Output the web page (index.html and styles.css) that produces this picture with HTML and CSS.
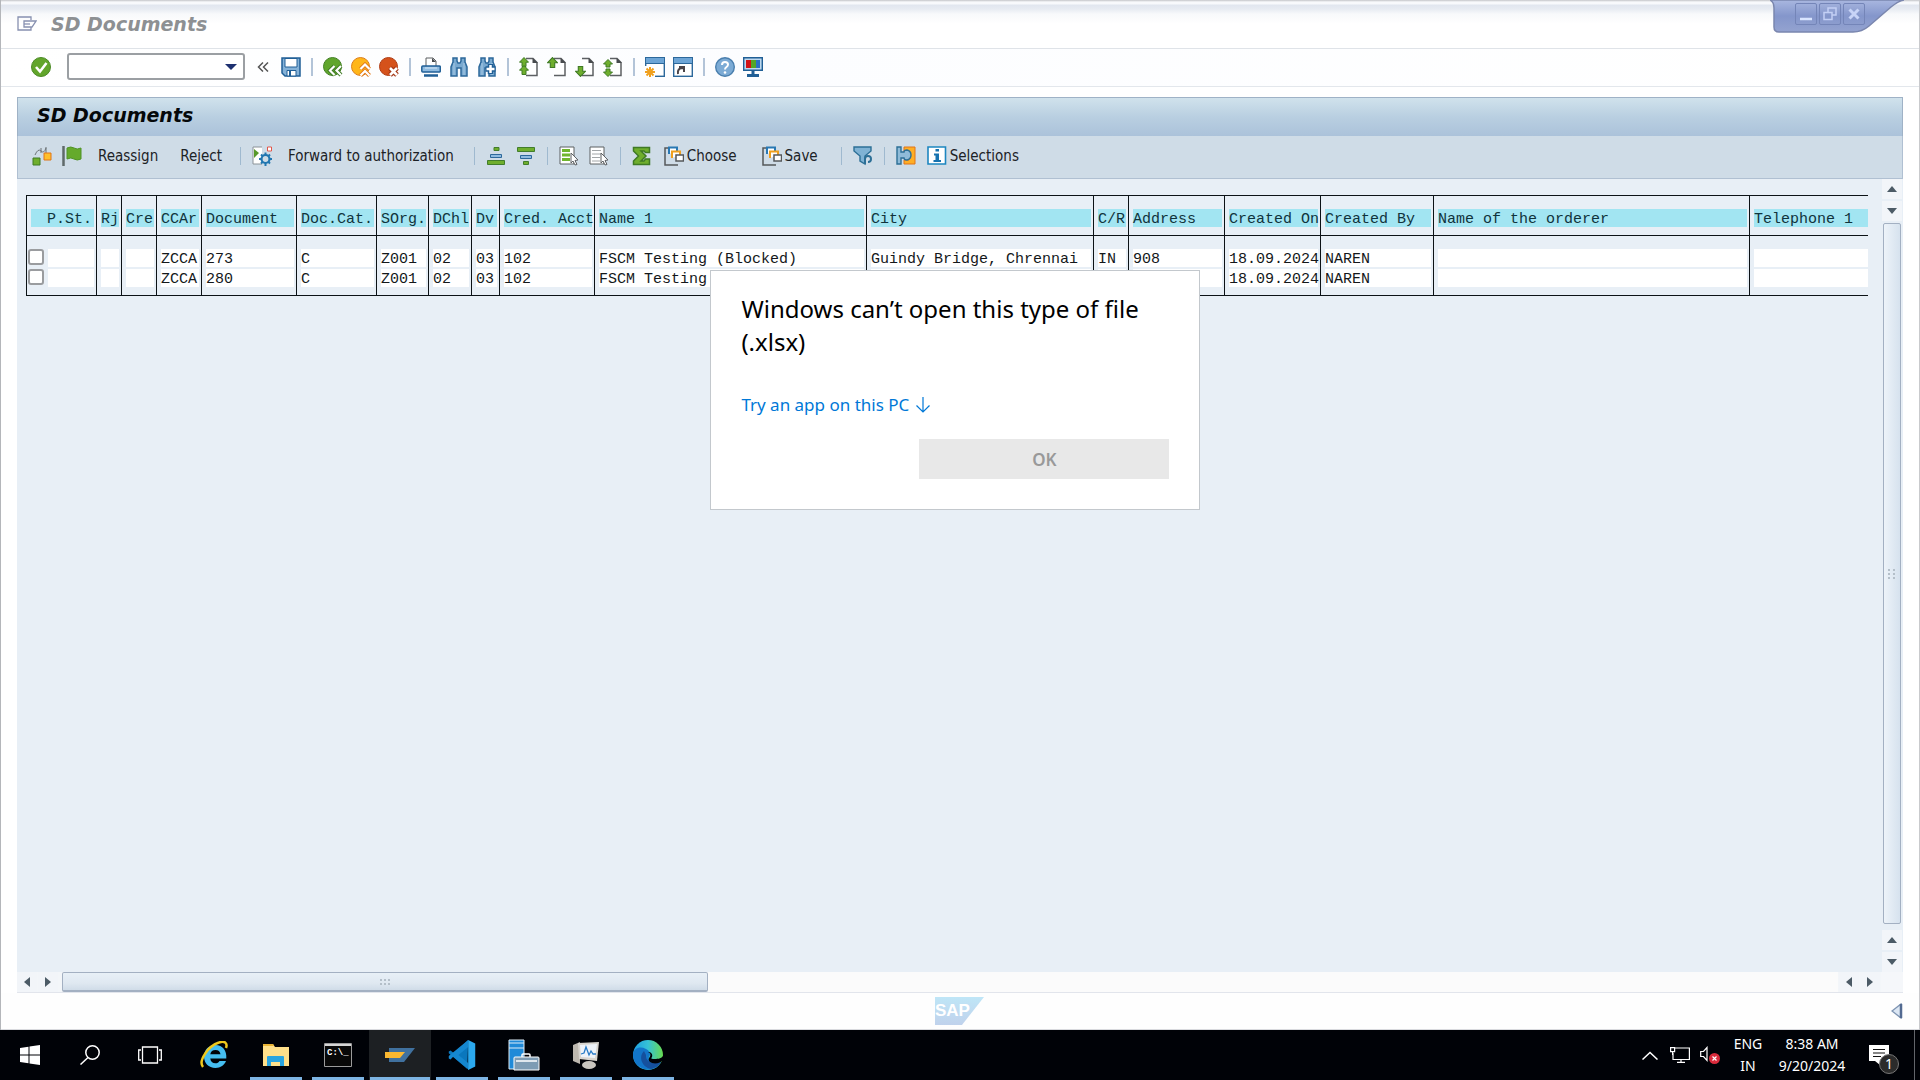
FILE: index.html
```html
<!DOCTYPE html>
<html lang="en">
<head>
<meta charset="utf-8">
<title>SD Documents</title>
<link rel="stylesheet" href="styles.css">
</head>
<body>
<svg class="defs" aria-hidden="true">
  <symbol id="bino" viewBox="0 0 20 20"><path d="M4 1h4v3l1 2h2l1-2V1h4v4l2 5v9h-6v-8H8v8H2v-9l2-5z" fill="#79a9d0" stroke="#2c689b" stroke-width="1.5"/><path d="M5 6v12M15 6v12" stroke="#a8c9e4"/></symbol>
  <symbol id="page" viewBox="0 0 20 20"><path d="M7 1.500h7l4 4v13H7" fill="#fff" stroke="#5d6063" stroke-width="1.500"/><path d="M13.500 1v5H19z" fill="#484b4e"/></symbol>
  <symbol id="up" viewBox="0 0 10 10"><path d="M5 .5 9.500 5.200H7V9.500H3V5.200H.5z" fill="#6fae2d" stroke="#3f7a24"/></symbol>
  <symbol id="down" viewBox="0 0 10 10"><path d="M5 9.500 .5 4.800H3V.5h4v4.300h2.500z" fill="#6fae2d" stroke="#3f7a24"/></symbol>
  <symbol id="updown" viewBox="0 0 10 18"><path d="M5 .5 9.500 5H7v3h-4V5H.5zM5 17.500.5 13H3v-3h4v3h2.500z" fill="#6fae2d" stroke="#3f7a24"/></symbol>
  <symbol id="variant" viewBox="0 0 20 20"><path d="M4 2H1v17h13" fill="none" stroke="#55585b" stroke-width="1.500"/><path d="M5 8V1.500h8V5" fill="#fff" stroke="#2878b4" stroke-width="2"/><path d="M8 12V5.500h8V9" fill="#fff" stroke="#f0a01e" stroke-width="2"/><path d="M12 9h7.500v6H12z" fill="#fff" stroke="#55585b" stroke-width="1.500"/></symbol>
  <symbol id="tri-up" viewBox="0 0 10 6"><path d="M0 6 5 0l5 6z" fill="#4c5b66"/></symbol>
  <symbol id="tri-down" viewBox="0 0 10 6"><path d="M0 0h10L5 6z" fill="#4c5b66"/></symbol>
  <symbol id="tri-left" viewBox="0 0 6 10"><path d="M6 0v10L0 5z" fill="#4c5b66"/></symbol>
  <symbol id="tri-right" viewBox="0 0 6 10"><path d="M0 0v10l6-5z" fill="#4c5b66"/></symbol>
</svg>

<div class="window">
  <header class="titlebar">
    <button class="icon-btn" aria-label="System menu"><svg width="20" height="16" viewBox="0 0 20 16" fill="none" stroke="#8790b0" stroke-width="1.300"><path d="M14 4V1H1v13h13v-3M7 5h12l-4 6H7z"/><path d="M7 8h6"/></svg></button>
    <span class="title">SD Documents</span>
  </header>
  <div class="win-controls">
    <svg class="win-shape" viewBox="0 0 134 36" width="134" height="36"><defs><linearGradient id="wc" x2="0" y2="1"><stop stop-color="#a9b7e0"/><stop offset=".5" stop-color="#8496cb"/><stop offset="1" stop-color="#94a3d0"/></linearGradient></defs><path d="M0 0q4 2 4 8v19q0 5 5 5h74q9 0 16-6l22-19q7-6 13-7z" fill="url(#wc)" stroke="#7a86ae" stroke-width="1.500"/></svg>
    <button aria-label="Minimize"><svg width="20" height="20" viewBox="0 0 20 20"><path d="M4 15h12" stroke="#d9e5ff" stroke-width="2.500"/></svg></button>
    <button aria-label="Restore"><svg width="20" height="20" viewBox="0 0 20 20" fill="none" stroke="#c3d0f5" stroke-width="1.500"><path d="M4 8.500h8v7H4zM8 8V4h8v7h-3.500"/></svg></button>
    <button aria-label="Close"><svg width="20" height="20" viewBox="0 0 20 20"><path d="m5.500 5.500 9 9M14.500 5.500l-9 9" stroke="#c8d4f7" stroke-width="3"/></svg></button>
  </div>

  <nav class="std-toolbar" aria-label="Standard toolbar">
    <button class="icon-btn enter" aria-label="Enter"><svg class="i20" viewBox="0 0 20 20"><circle cx="10" cy="10" r="9.500" fill="#62a52b" stroke="#4c8b27"/><path d="m5 10 4 4.500L15.500 6" fill="none" stroke="#fff" stroke-width="2.600"/></svg></button>
    <div class="command"><input type="text" aria-label="Command"><svg width="12" height="6" viewBox="0 0 12 6"><path d="M0 0h12L6 6z" fill="#1d3070"/></svg></div>
    <button class="icon-btn collapse" aria-label="Collapse"><svg width="12" height="10" viewBox="0 0 12 10" fill="none" stroke="#555" stroke-width="1.500"><path d="M6 .5 1.500 5 6 9.500M11 .5 6.500 5 11 9.500"/></svg></button>
    <button class="icon-btn save" aria-label="Save"><svg class="i20" viewBox="0 0 20 20"><path d="M1 1h18v18H4l-3-3z" fill="#85b2d8" stroke="#205f96" stroke-width="1.500"/><path d="M4 1.500h12V10H4zM6 13.500h9V19H6z" fill="#fff" stroke="#205f96"/><path d="M8 14h2v5H8z" fill="#205f96"/></svg></button>
    <i class="sep"></i>
    <button class="icon-btn" aria-label="Back"><svg class="i20" viewBox="0 0 20 20"><circle cx="9.500" cy="9.500" r="9" fill="#60a52c" stroke="#438025"/><path d="M11.500 9 7 13.500l4.500 4.500M18 9l-4.500 4.500L18 18" fill="none" stroke="#3f7a24" stroke-width="4"/><path d="M11.500 9 7 13.500l4.500 4.500M18 9l-4.500 4.500L18 18" fill="none" stroke="#fff" stroke-width="2.200"/></svg></button>
    <button class="icon-btn" aria-label="Exit"><svg class="i20" viewBox="0 0 20 20"><circle cx="9.500" cy="9.500" r="9" fill="#ffb61a" stroke="#dc7e1b"/><path d="m9.500 12 4.500-4.500 4.500 4.500M9.500 18.500 14 14l4.500 4.500" fill="none" stroke="#e37a18" stroke-width="4"/><path d="m9.500 12 4.500-4.500 4.500 4.500M9.500 18.500 14 14l4.500 4.500" fill="none" stroke="#fff" stroke-width="2.200"/></svg></button>
    <button class="icon-btn" aria-label="Cancel"><svg class="i20" viewBox="0 0 20 20"><circle cx="9.500" cy="9.500" r="9" fill="#d5521b" stroke="#b03d15"/><path d="m11 11 7 7M18 11l-7 7" stroke="#a33513" stroke-width="5"/><path d="m11 11 7 7M18 11l-7 7" stroke="#fff" stroke-width="2.600"/></svg></button>
    <i class="sep"></i>
    <button class="icon-btn" aria-label="Print"><svg class="i20" viewBox="0 0 20 20"><path d="M5 9V1h7l3 3v5" fill="#fff" stroke="#5d6063"/><path d="M11 1v4h4z" fill="#484b4e"/><rect x=".8" y="9" width="18.500" height="6" rx="1" fill="#8fbbe0" stroke="#205f96" stroke-width="1.500"/><path d="M3 18.500h14" stroke="#205f96" stroke-width="2.500"/><path d="M4 11h12" stroke="#d6e8f7"/></svg></button>
    <button class="icon-btn" aria-label="Find"><svg class="i20"><use href="#bino"/></svg></button>
    <button class="icon-btn" aria-label="Find next"><svg class="i20" viewBox="0 0 20 20"><use href="#bino" width="20" height="20"/><path d="M13.500 7v10M8.500 12h10" stroke="#205f96" stroke-width="5.500"/><path d="M13.500 8v8M9.500 12h8" stroke="#fff" stroke-width="2.500"/></svg></button>
    <i class="sep"></i>
    <button class="icon-btn" aria-label="First page"><svg class="i20" viewBox="0 0 20 20"><use href="#page" width="20" height="20"/><use href="#up" width="10" height="10"/><use href="#up" y="8" width="10" height="10"/></svg></button>
    <button class="icon-btn" aria-label="Previous page"><svg class="i20" viewBox="0 0 20 20"><use href="#page" width="20" height="20"/><use href="#up" width="11" height="11"/></svg></button>
    <button class="icon-btn" aria-label="Next page"><svg class="i20" viewBox="0 0 20 20"><use href="#page" width="20" height="20"/><use href="#down" y="9" width="11" height="11"/></svg></button>
    <button class="icon-btn" aria-label="Last page"><svg class="i20" viewBox="0 0 20 20"><use href="#page" width="20" height="20"/><use href="#updown" y="2" width="10" height="18"/></svg></button>
    <i class="sep"></i>
    <button class="icon-btn" aria-label="New session"><svg class="i20" viewBox="0 0 20 20"><rect x=".7" y=".7" width="18.600" height="18.600" fill="#fff" stroke="#2c689b" stroke-width="1.400"/><path d="M1 1h18v5H1z" fill="#6da5d6"/><path d="M1 6.500h18" stroke="#2c689b"/><path d="M0 9h10v11H0z" fill="#fff"/><path d="M5 10v10M0 15h10M1.500 11.500l7 7M8.500 11.500l-7 7" stroke="#f0a01e" stroke-width="2"/></svg></button>
    <button class="icon-btn" aria-label="Create shortcut"><svg class="i20" viewBox="0 0 20 20"><rect x=".7" y=".7" width="18.600" height="18.600" fill="#fff" stroke="#2c689b" stroke-width="1.400"/><path d="M1 1h18v5H1z" fill="#6da5d6"/><path d="M1 6.500h18" stroke="#2c689b"/><path d="M5 17q-1-6 5-6M6 10h5v5" fill="none" stroke="#4a4448" stroke-width="2"/></svg></button>
    <i class="sep"></i>
    <button class="icon-btn" aria-label="Help"><svg class="i20" viewBox="0 0 20 20"><circle cx="10" cy="10" r="9.300" fill="#7cabd5" stroke="#4a7fae" stroke-width="1.400"/><path d="M7 8q0-3 3-3t3 2.500q0 1.500-1.500 2.500T10 12.500" fill="none" stroke="#fff" stroke-width="2"/><circle cx="10" cy="15.500" r="1.300" fill="#fff"/></svg></button>
    <button class="icon-btn" aria-label="Customize layout"><svg class="i20" viewBox="0 0 20 20"><path d="M.7.7h18.600v12.600H.7z" fill="#bdd8ee" stroke="#205f96" stroke-width="1.400"/><path d="M3 3h5v8H3z" fill="#d11216"/><path d="M8 3h5v8H8z" fill="#54a528"/><path d="M13 3h4v8h-4z" fill="#2b6fc4"/><path d="M10 13v5M4 18.500h12" stroke="#205f96" stroke-width="3"/></svg></button>
  </nav>

  <main class="content">
    <h1 class="screen-title">SD Documents</h1>
    <div class="app-toolbar">
      <button aria-label="Check"><svg class="i20" viewBox="0 0 20 20"><path d="M3 9q3-7 6-4t5-3M14 7V1M9 2v5" fill="none" stroke="#6c7377"/><path d="M1 12h7v7H1z" fill="#6fae2d" stroke="#3f7a24"/><path d="M12 7h7v7h-7z" fill="#ffbf2b" stroke="#e07418"/></svg></button>
      <button class="flag" aria-label="Flag"><svg class="i20" viewBox="0 0 20 20"><path d="M1.500 0v20" stroke="#5f6a6a" stroke-width="2.500"/><path d="M5 2q4-2 7 0t7 0v11q-4 2-7 0t-7 0z" fill="#65aa2b" stroke="#4f9226"/></svg></button>
      <button class="txt reassign">Reassign</button>
      <button class="txt reject">Reject</button>
      <i class="sep"></i>
      <button aria-label="Process"><svg class="i20" viewBox="0 0 20 20"><path d="M10 18H1V1h9" fill="#fff" stroke="#8b9398"/><path d="m2 3 5 4-5 5z" fill="#57992b"/><circle cx="13.500" cy="13" r="4" fill="#cfdce6" stroke="#2176b0" stroke-width="2.200"/><path d="M13.500 6.500v3M13.500 17v3M7 13h3M17 13h3M9 8.500l2 2M16 15.500l2 2M18 8.500l-2 2M11 15.500l-2 2" stroke="#2176b0" stroke-width="2"/><path d="M15.500 1h4v4h-4z" fill="#fff" stroke="#e0564a"/></svg></button>
      <button class="txt forward">Forward to authorization</button>
      <i class="sep"></i>
      <button aria-label="Sort ascending"><svg class="i20" viewBox="0 0 20 20" stroke="#417d2b"><path d="M8 1.500h5v3H8zM1.500 14.500h17v4h-17z" fill="#6fae2d"/><path d="M4.500 8.500h11v3h-11z" fill="#8fbbe0" stroke="#2c689b"/></svg></button>
      <button aria-label="Sort descending"><svg class="i20" viewBox="0 0 20 20" stroke="#417d2b"><path d="M1.500 1.500h17v4h-17zM7.500 15.500h5v3h-5z" fill="#6fae2d"/><path d="M4.500 9.500h11v3h-11z" fill="#8fbbe0" stroke="#2c689b"/></svg></button>
      <i class="sep"></i>
      <button aria-label="Select all"><svg class="i20" viewBox="0 0 20 20"><path d="M1 1h14v17H1z" fill="#fff" stroke="#5d6063"/><path d="M3 4.500h8M3 9h8M3 13.500h8" stroke="#70b52d" stroke-width="3"/><path d="m12 7 7 7-3 .5 2 4-2 .5-2-4-2 2z" fill="#fff" stroke="#5d6063"/></svg></button>
      <button aria-label="Deselect all"><svg class="i20" viewBox="0 0 20 20"><path d="M1 1h14v17H1z" fill="#fff" stroke="#5d6063"/><path d="M3 4.500h9M3 8h9M3 11.500h8M3 15h8" stroke="#a2a6a8"/><path d="m12 7 7 7-3 .5 2 4-2 .5-2-4-2 2z" fill="#fff" stroke="#5d6063"/></svg></button>
      <i class="sep"></i>
      <button aria-label="Total"><svg class="i20" viewBox="0 0 20 20"><path d="M1.500 1.500h16v5h-4L12 5H9l5 5-5 5h3l1.500-2h4v5.500h-16V15l5-5-5-5z" fill="#6fae2d" stroke="#3f7a24" stroke-width="1.500"/></svg></button>
      <button class="txt choose"><svg class="i20"><use href="#variant"/></svg>Choose</button>
      <button class="txt savev"><svg class="i20"><use href="#variant"/></svg>Save</button>
      <i class="sep"></i>
      <button aria-label="Filter"><svg class="i20" viewBox="0 0 20 20"><path d="M1 1h17v4l-6 5v8l-5-3v-5L1 5z" fill="#7fb2d4" stroke="#2c6f96" stroke-width="1.400"/><path d="M12 18v-5q0-3 3-3t3 3-3 3" fill="none" stroke="#2c6f96" stroke-width="2"/></svg></button>
      <i class="sep"></i>
      <button aria-label="Interface"><svg class="i20" viewBox="0 0 20 20"><path d="M8 1h11v17H8v-4h5V6H8z" fill="#ffae24" stroke="#e07418"/><path d="M1 1h4v5h3q0-2 3-2 4 1 4 5t-4 5q-3 0-3-2H5v6H1z" fill="#8fbbd8" stroke="#2c6f96" stroke-width="1.400"/></svg></button>
      <button class="txt selections"><svg class="i20" viewBox="0 0 20 20"><path d="M1 1h17.500v17H1z" fill="#fff" stroke="#1d86c0" stroke-width="1.600"/><path d="M8.500 3h3.500v2.500H8.500zM7 7.500h5V14h2v2H6.500v-2h2V9.500H7z" fill="#1673b0"/></svg>Selections</button>
    </div>

    <div class="work">
      <div class="list">
        <table class="grid">
          <colgroup><col class="c70"><col class="c25"><col class="c35"><col class="c45"><col class="c95"><col class="c80"><col class="c52"><col class="c43"><col class="c28"><col class="c95"><col class="c272"><col class="c227"><col class="c35"><col class="c96"><col class="c96"><col class="c113"><col class="c316"><col></colgroup>
          <thead><tr><th class="pst"><span>P.St.</span></th><th><span>Rj</span></th><th><span>Cre</span></th><th><span>CCAr</span></th><th><span>Document</span></th><th><span>Doc.Cat.</span></th><th><span>SOrg.</span></th><th><span>DChl</span></th><th><span>Dv</span></th><th><span>Cred. Acct</span></th><th><span>Name 1</span></th><th><span>City</span></th><th><span>C/R</span></th><th><span>Address</span></th><th><span>Created On</span></th><th><span>Created By</span></th><th><span>Name of the orderer</span></th><th><span>Telephone 1</span></th></tr></thead>
          <tbody>
            <tr><td class="sel"><input type="checkbox" aria-label="Select document 273"><span></span></td><td><span></span></td><td><span></span></td><td><span>ZCCA</span></td><td><span>273</span></td><td><span>C</span></td><td><span>Z001</span></td><td><span>02</span></td><td><span>03</span></td><td><span>102</span></td><td><span>FSCM Testing (Blocked)</span></td><td><span>Guindy Bridge, Chrennai</span></td><td><span>IN</span></td><td><span>908</span></td><td><span>18.09.2024</span></td><td><span>NAREN</span></td><td><span></span></td><td><span></span></td></tr>
            <tr><td class="sel"><input type="checkbox" aria-label="Select document 280"><span></span></td><td><span></span></td><td><span></span></td><td><span>ZCCA</span></td><td><span>280</span></td><td><span>C</span></td><td><span>Z001</span></td><td><span>02</span></td><td><span>03</span></td><td><span>102</span></td><td><span>FSCM Testing</span></td><td><span></span></td><td><span></span></td><td><span></span></td><td><span>18.09.2024</span></td><td><span>NAREN</span></td><td><span></span></td><td><span></span></td></tr>
          </tbody>
        </table>
      </div>
      <div class="vscroll">
        <button aria-label="Scroll up"><svg width="10" height="6"><use href="#tri-up"/></svg></button>
        <button aria-label="Scroll down"><svg width="10" height="6"><use href="#tri-down"/></svg></button>
        <div class="vthumb"><svg width="8" height="10" viewBox="0 0 8 10" fill="#b4bfc9"><path d="M0 0h2v2H0zM5 0h2v2H5zM0 4h2v2H0zM5 4h2v2H5zM0 8h2v2H0zM5 8h2v2H5z"/></svg></div>
        <button aria-label="Page up"><svg width="10" height="6"><use href="#tri-up"/></svg></button>
        <button aria-label="Page down"><svg width="10" height="6"><use href="#tri-down"/></svg></button>
      </div>
    </div>
    <div class="hscroll">
      <button aria-label="Scroll left"><svg width="6" height="10"><use href="#tri-left"/></svg></button>
      <button aria-label="Scroll right"><svg width="6" height="10"><use href="#tri-right"/></svg></button>
      <div class="htrack"><div class="hthumb"><svg width="10" height="8" viewBox="0 0 10 8" fill="#b4bfc9"><path d="M0 1h2v2H0zM4 1h2v2H4zM8 1h2v2H8zM0 5h2v2H0zM4 5h2v2H4zM8 5h2v2H8z"/></svg></div></div>
      <button aria-label="Page left"><svg width="6" height="10"><use href="#tri-left"/></svg></button>
      <button aria-label="Page right"><svg width="6" height="10"><use href="#tri-right"/></svg></button>
      <div class="corner"></div>
    </div>
  </main>

  <footer class="status">
    <div class="sap">SAP</div>
    <button class="icon-btn expand" aria-label="Show status"><svg width="12" height="16" viewBox="0 0 12 16"><path d="M10 1v14L1 8z" fill="#dce7f4" stroke="#7f95b3" stroke-width="1.400"/><path d="M10 1v14" stroke="#536a91" stroke-width="2.500"/></svg></button>
  </footer>
</div>

<section class="dialog" role="dialog" aria-labelledby="dlg-title">
  <h2 id="dlg-title">Windows can’t open this type of file (.xlsx)</h2>
  <a href="#">Try an app on this PC <svg width="14" height="16" viewBox="0 0 14 16" fill="none" stroke="#0078d7" stroke-width="1.200"><path d="M7 0v15M.5 8.500 7 15l6.500-6.500"/></svg></a>
  <button class="ok" disabled>OK</button>
</section>

<footer class="taskbar">
  <button class="tb-sys" aria-label="Start"><svg width="20" height="20" viewBox="0 0 20 20" fill="#fff"><path d="M0 3l8.500-1.200v7.700H0zM9.500 1.600 20 0v9.500H9.500zM0 10.500h8.500v7.700L0 17zM9.500 10.500H20V20L9.500 18.400z"/></svg></button>
  <button class="tb-sys" aria-label="Search"><svg width="20" height="20" viewBox="0 0 20 20" fill="none" stroke="#fff" stroke-width="1.500"><circle cx="12.500" cy="7.500" r="6.700"/><path d="M8 12.500.5 19.500"/></svg></button>
  <button class="tb-sys view" aria-label="Task view"><svg width="24" height="18" viewBox="0 0 24 18" fill="none" stroke="#fff" stroke-width="1.300"><path d="M4.500 1h15v16h-15zM3 4H.7v10H3M21 4h2.300v10H21"/></svg></button>
  <button class="tb-app" aria-label="Internet Explorer"><svg width="28" height="28" viewBox="0 0 28 28"><path d="M15.500 4C8.500 4 4 9 4 15.500S8.500 27 15.500 27c5 0 9-3 10.500-7h-6.500c-.8 1.600-2.300 2.300-4 2.300-3 0-5-1.800-5.200-4.800h16C27 9.500 22.500 4 15.500 4zm-5.200 9.200C10.700 10.500 12.600 9 15.500 9s4.600 1.500 5 4.200z" fill="#45bdf0"/><path d="M3 26C-2 20 8 5 19 1.500 24-.5 28 1.500 26 7" fill="none" stroke="#f0c81c" stroke-width="2.500"/></svg></button>
  <button class="tb-app open" aria-label="File Explorer"><svg width="28" height="24" viewBox="0 0 28 24"><path d="M1 1h10l2 3h14v19H1z" fill="#ffe08a"/><path d="M1 1h10l1 2H1z" fill="#e9b435"/><path d="M5 23v-9q0-1 1-1h15q1 0 1 1v9h-4v-4H9v4z" fill="#2aa5e0"/></svg></button>
  <button class="tb-app open" aria-label="Command Prompt"><svg width="28" height="24" viewBox="0 0 28 24"><path d="M.5.500h27v23H.5z" fill="#080808" stroke="#9b9b9b"/><path d="M1 1h26v2H1z" fill="#d5d5d5"/><text x="3" y="12" class="cmd">C:\_</text></svg></button>
  <button class="tb-app open active" aria-label="SAP Logon"><svg width="30" height="16" viewBox="0 0 30 16"><path d="M4 1h26L19 15H4z" fill="#40719f"/><path d="M0 5h20l-5 6H0z" fill="#fbb831"/></svg></button>
  <button class="tb-app open" aria-label="Visual Studio Code"><svg width="30" height="30" viewBox="0 0 30 34"><path d="M22 0 6 15 2 12 0 13v2l21 18z" fill="#0a77bd"/><path d="M23 34 5 19l-3 3-2-1v-3L22 0v8L11 17l11 9z" fill="#1587cf"/><path d="m22 0 8 4v26l-8 4z" fill="#2ba9ef"/></svg></button>
  <button class="tb-app open" aria-label="Server Manager"><svg width="32" height="32" viewBox="0 0 32 32"><path d="M1 1h15v29H1z" fill="#1f8ad8" stroke="#dcecf8"/><path d="M1 4h15M1 9h15" stroke="#dcecf8"/><path d="M6 19q0-1 1-1h23q1 0 1 1v12H6z" fill="#7d9cb4" stroke="#fff"/><path d="M14 18v-2q0-1 1-1h6q1 0 1 1v2M8 22h21" fill="none" stroke="#fff" stroke-width="1.500"/></svg></button>
  <button class="tb-app open" aria-label="Resource Monitor"><svg width="30" height="30" viewBox="0 0 30 30"><path d="M2 5 9 2v22l-7-3z" fill="#bcb7ae"/><path d="m7 3 21-1-2 19-18-2z" fill="#d8d5cf"/><path d="m9 5 17-1-2 14-14-1z" fill="#eef3f9"/><path d="m10 14 3-1 2-6 3 8 2-4 2 3h3" fill="none" stroke="#287bc7" stroke-width="1.300"/><ellipse cx="18" cy="25" rx="7" ry="4" fill="#c9c6bf"/></svg></button>
  <button class="tb-app open" aria-label="Microsoft Edge"><svg width="30" height="30" viewBox="0 0 30 30"><defs><linearGradient id="eg"><stop stop-color="#1b9de2"/><stop offset=".5" stop-color="#36c2d6"/><stop offset="1" stop-color="#68dc50"/></linearGradient></defs><circle cx="15" cy="15" r="15" fill="url(#eg)"/><path d="M0 14C1 8 7 6 13 9c4 2 5 5 3 8-1 3 1 6 6 6 3 0 4 0 6-1-4 8-14 10-21 5-5-3-7-8-7-13z" fill="#1275c9"/><path d="M11 11c-6 6-2 16 7 18 4-1 8-3 10-7-7 3-16 0-15-7z" fill="#15509d"/><path d="M15 12c3 1 3 4 1 6-1 2 0 4 3 5 4 1 8 0 10-2l1 1v-6c-2 3-6 3-10 3-2 0-2-1-1-2 1-3-1-5-4-5z" fill="#000207"/></svg></button>
  <div class="tray">
    <button class="t-chev" aria-label="Show hidden icons"><svg width="16" height="9" viewBox="0 0 16 9"><path d="m.5 8.500 7.500-7 7.500 7" fill="none" stroke="#fff" stroke-width="1.500"/></svg></button>
    <button class="t-net" aria-label="Network"><svg width="20" height="16" viewBox="0 0 20 16" fill="none" stroke="#fff" stroke-width="1.200"><path d="M5 1h14.400v11.500H3V6M11 12.500v3M7 15.400h8M.6.600h4v4h-4zM2.600 5v3"/></svg></button>
    <button class="t-vol" aria-label="Volume"><svg width="20" height="18" viewBox="0 0 20 18"><path d="M.7 5.500h2.800L7 1.500v13l-3.500-4H.7z" fill="none" stroke="#fff" stroke-width="1.200"/><circle cx="14.500" cy="12.500" r="5.500" fill="#d92b3c"/><path d="m12.500 10.500 4 4m0-4-4 4" stroke="#fff" stroke-width="1.200"/></svg></button>
    <div class="t-lang"><div>ENG</div><div>IN</div></div>
    <div class="t-clock"><div>8:38 AM</div><div>9/20/2024</div></div>
    <button class="t-note" aria-label="1 notification"><svg width="20" height="20" viewBox="0 0 20 20"><path d="M0 0h20v16h-9v4l-5-4H0z" fill="#fff"/><path d="M4 4.500h12M4 8h12M4 11.500h8" stroke="#111" stroke-width="1.200"/></svg><span class="badge">1</span></button>
    <div class="desk"></div>
  </div>
</footer>
</body>
</html>
```
FILE: styles.css
```css
* { box-sizing: border-box; }
body {
  margin: 0;
  min-height: 100vh;
  display: flex;
  flex-direction: column;
  position: relative;
  background: #fff;
  font-family: "DejaVu Sans Condensed", "DejaVu Sans", sans-serif;
  font-size: 15px;
  color: #1c2226;
}
button {
  margin: 0;
  padding: 0;
  border: 0;
  background: none;
  font: inherit;
  color: inherit;
  display: flex;
  align-items: center;
  justify-content: center;
  flex: none;
}
svg { display: block; flex: none; }
.defs { position: absolute; width: 0; height: 0; }
.i20 { width: 20px; height: 20px; }

.window {
  flex: 1;
  display: flex;
  flex-direction: column;
  position: relative;
  border-left: 1px solid #b4b6ba;
  border-right: 1px solid #c9cacd;
}
.titlebar {
  height: 49px;
  display: flex;
  align-items: center;
  gap: 14px;
  padding: 0 16px;
  border-bottom: 1px solid #dfe3e8;
  background: linear-gradient(#c3c4c8 0, #f8f9fc 2px, #f8f9fc 4px, #e1e6ef 5px, #e7ebf2 9px, #f8f9fb 14px, #fff 24px);
}
.title, .screen-title {
  font-family: "DejaVu Sans", sans-serif;
  font-weight: bold;
  font-style: italic;
  font-size: 19px;
  line-height: 24px;
}
.title { color: #8d9093; }
.win-controls {
  position: absolute;
  top: 0;
  right: 23px;
  width: 122px;
  height: 28px;
  display: flex;
  align-items: center;
  gap: 2px;
  padding-left: 21px;
}
.win-controls button { border: 1px solid #7485b8; border-radius: 2px; position: relative; }
.win-shape { position: absolute; top: 0; left: -4px; }

.std-toolbar {
  height: 38px;
  display: flex;
  align-items: center;
  gap: 8px;
  padding: 0 0 2px 30px;
  border-bottom: 1px solid #e3e7ec;
  background: linear-gradient(90deg, #fff 0, #fcfdff 40%, #fff 100%);
}
.sep {
  flex: none;
  width: 2px;
  height: 18px;
  margin: 0 2px;
  background: #b3c4d8;
}
.command {
  width: 178px;
  height: 27px;
  margin: 0 4px 0 8px;
  display: flex;
  align-items: center;
  padding-right: 6px;
  border: 2px solid #9b9fa3;
  border-radius: 3px;
  background: #fff;
}
.command input { flex: 1; min-width: 0; height: 21px; border: 0; background: none; outline: 0; }
.save { margin-left: 4px; }

.content {
  flex: 1;
  display: flex;
  flex-direction: column;
  margin: 10px 16px 0;
}
.screen-title {
  margin: 0;
  height: 39px;
  padding: 5px 19px;
  color: #05080a;
  border: solid #9fb2c6;
  border-width: 1px 1px 0;
  background: linear-gradient(#d0e2ec, #b9cfe1 50%, #abc2da);
}
.app-toolbar {
  height: 43px;
  display: flex;
  align-items: center;
  gap: 10px;
  padding: 0 0 2px 14px;
  border: solid #b0c0d2;
  border-width: 0 1px 1px;
  background: #cfdce7;
}
.app-toolbar .sep { width: 1px; margin: 0 1px; background: #9fb9cf; }
.txt { gap: 3px; white-space: nowrap; }
.reassign { margin-left: 6px; }
.reject { margin: 0 7px 0 12px; }
.forward { margin: 0 9px 0 6px; }
.choose { margin-left: 2px; }
.savev { margin: 0 12px 0 15px; }
.selections { margin-left: 1px; }

.work {
  flex: 1;
  display: flex;
  background: #e8eff6;
}
.list { flex: 1; min-width: 0; padding: 16px 13px 0 9px; }
.grid {
  width: 100%;
  table-layout: fixed;
  border-collapse: separate;
  border-spacing: 0;
  border: solid #0c1216;
  border-width: 1px 0;
  font: 15px/22px "Liberation Mono", monospace;
  color: #14171a;
}
.grid th, .grid td {
  padding: 0 2px 0 4px;
  border-left: 1px solid #0c1216;
  text-align: left;
  font-weight: normal;
  vertical-align: top;
  white-space: nowrap;
}
.grid th { height: 40px; padding-top: 13px; border-bottom: 1px solid #0c1216; }
.grid td { height: 20px; }
.grid tbody tr:first-child td { padding-top: 13px; }
.grid tbody tr:last-child td { padding-bottom: 6px; }
.grid span { display: block; height: 18px; margin-bottom: 2px; }
.grid th span { background: #a2e5f2; color: #10333c; }
.grid td span { background: #fff; }
.grid .pst span { padding-left: 16px; }
.grid th:last-child, .grid td:last-child { padding-right: 0; }
.grid .sel { padding-left: 1px; }
.grid .sel input {
  appearance: none;
  float: left;
  width: 16px;
  height: 16px;
  margin: 0 4px 0 0;
  border: 2px solid #9a9c9f;
  border-radius: 3px;
  background: #fff;
}
.grid .sel span { overflow: hidden; }
.c25 { width: 25px; }
.c28 { width: 28px; }
.c35 { width: 35px; }
.c43 { width: 43px; }
.c45 { width: 45px; }
.c52 { width: 52px; }
.c70 { width: 70px; }
.c80 { width: 80px; }
.c95 { width: 95px; }
.c96 { width: 96px; }
.c113 { width: 113px; }
.c227 { width: 227px; }
.c272 { width: 272px; }
.c316 { width: 316px; }

.vscroll {
  width: 22px;
  display: flex;
  flex-direction: column;
  align-items: center;
  gap: 2px;
}
.vscroll button, .hscroll button { width: 20px; height: 20px; background: #f2f5f9; }
.vthumb {
  flex: 1;
  width: 18px;
  margin-bottom: 4px;
  display: flex;
  align-items: center;
  justify-content: center;
  border: 1px solid #a3b0c2;
  border-radius: 2px;
  background: linear-gradient(90deg, #edf3f9, #d6e2ee);
}
.hscroll {
  height: 21px;
  display: flex;
  gap: 1px;
  background: #f3f6f9;
  border-bottom: 1px solid #e2e5ec;
}
.htrack { flex: 1; margin-left: 3px; background: #fbfbfb; }
.hthumb {
  width: 36.4%;
  height: 20px;
  display: flex;
  align-items: center;
  justify-content: center;
  border: 1px solid #a3b0c2;
  border-bottom-width: 2px;
  border-radius: 2px;
  background: linear-gradient(#e8f0f7, #dfe8f1 60%, #d0dce8);
}
.corner { width: 22px; background: #f5f7fa; }

.status {
  height: 37px;
  display: flex;
  align-items: center;
  justify-content: flex-end;
  padding-right: 16px;
  border-bottom: 1px solid #d9dade;
  background: #fefefe;
}
.sap {
  width: 49px;
  height: 28px;
  margin-right: auto;
  margin-left: calc(50% - 17px);
  font: bold 17px/28px "Liberation Sans", sans-serif;
  color: #fff;
  background: linear-gradient(#bfe6f7, #c0d2ec);
  clip-path: polygon(0 0, 100% 0, 55% 100%, 0 100%);
}

.dialog {
  position: absolute;
  left: 37%;
  top: 25%;
  width: 490px;
  padding: 21px 30px 30px;
  display: flex;
  flex-direction: column;
  align-items: flex-start;
  border: 1px solid #c3c8cd;
  background: #fff;
  font-family: "Noto Sans", sans-serif;
  color: #000;
}
.dialog h2 { margin: 0; font-size: 24px; line-height: 33px; font-weight: normal; }
.dialog a {
  margin-top: 35px;
  display: flex;
  align-items: center;
  gap: 7px;
  font-size: 17px;
  line-height: 24px;
  color: #0078d7;
  text-decoration: none;
}
.ok {
  align-self: flex-end;
  width: 250px;
  height: 40px;
  margin-top: 22px;
  background: #e8e8e8;
  color: #999;
  font-size: 17px;
  font-weight: 600;
}

.taskbar {
  height: 50px;
  display: flex;
  background: #000207;
  color: #fff;
  font-family: "Noto Sans", sans-serif;
  font-size: 14px;
}
.tb-sys { width: 60px; }
.view { margin-right: 3px; }
.tb-app { width: 62px; position: relative; }
.open::after {
  content: "";
  position: absolute;
  inset: auto 5px 0;
  height: 3px;
  background: #7db4e3;
}
.active { background: #1d2023; }
.active::after { inset: auto 1px 0; }
.cmd { font: bold 9px "Liberation Mono", monospace; fill: #fff; }
.tray {
  margin-left: auto;
  display: flex;
  align-items: center;
  line-height: 22px;
  text-align: center;
}
.t-chev { margin-right: 12px; }
.t-net { margin-right: 10px; }
.t-lang { width: 56px; }
.t-clock { width: 72px; }
.t-note { position: relative; margin: 0 25px 0 21px; }
.badge {
  position: absolute;
  left: 10px;
  top: 9px;
  width: 20px;
  height: 20px;
  border: 1px solid #777;
  border-radius: 50%;
  background: #2b2b2b;
  line-height: 18px;
}
.desk { width: 6px; height: 50px; border-left: 1px solid #62656a; }
```
